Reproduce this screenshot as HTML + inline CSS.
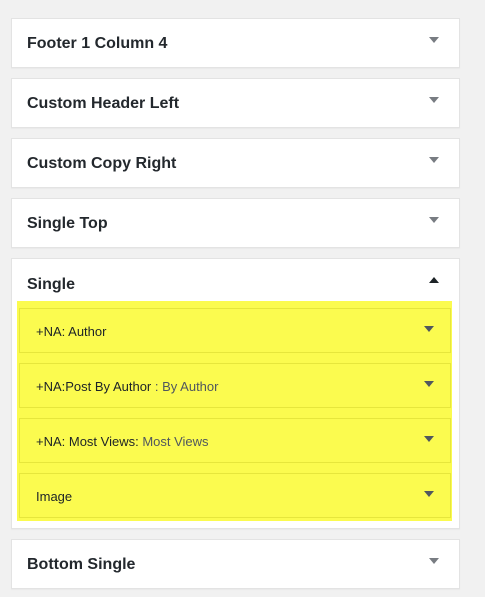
<!DOCTYPE html>
<html><head><style>
body{margin:0;width:485px;height:597px;background:#f1f1f1;font-family:"Liberation Sans",sans-serif;position:relative;overflow:hidden}
.box{position:absolute;left:11px;width:447px;background:#fff;border:1px solid #e3e3e3;box-shadow:0 1px 1px rgba(0,0,0,.04)}
.t{position:absolute;left:15px;font-size:16px;font-weight:bold;color:#23282d}
.ar{position:absolute;left:417px;width:0;height:0;border-left:5px solid transparent;border-right:5px solid transparent;border-top:6px solid #787c82}
.up{border-top:none;border-bottom:6px solid #1d2327}
.y{position:absolute;left:17px;top:301px;width:435px;height:220px;background:#fbfb4f}
.it{position:absolute;left:19px;width:430px;height:43px;border:1px solid #e6e63c;background:#fbfb4f}
.it span{position:absolute;left:16px;top:15px;font-size:13px;color:#1d2327}
.it i{font-style:normal;color:#50575e}
.it .ar{left:404px;top:17px;border-top-color:#50575e}
</style></head><body>
<div class="box" style="top:18px;height:48px"><div class="t" style="top:16px">Footer 1 Column 4</div><div class="ar" style="top:18px"></div></div>
<div class="box" style="top:78px;height:48px"><div class="t" style="top:16px">Custom Header Left</div><div class="ar" style="top:18px"></div></div>
<div class="box" style="top:138px;height:48px"><div class="t" style="top:16px">Custom Copy Right</div><div class="ar" style="top:18px"></div></div>
<div class="box" style="top:198px;height:48px"><div class="t" style="top:16px">Single Top</div><div class="ar" style="top:18px"></div></div>
<div class="box" style="top:258px;height:269px"><div class="t" style="top:17px">Single</div><div class="ar up" style="top:18px"></div></div>
<div class="y"></div>
<div class="it" style="top:308px"><span>+NA: Author</span><div class="ar"></div></div>
<div class="it" style="top:363px"><span>+NA:Post By Author <i>: By Author</i></span><div class="ar"></div></div>
<div class="it" style="top:418px"><span>+NA: Most Views: <i>Most Views</i></span><div class="ar"></div></div>
<div class="it" style="top:473px"><span>Image</span><div class="ar"></div></div>
<div class="box" style="top:539px;height:48px"><div class="t" style="top:16px">Bottom Single</div><div class="ar" style="top:18px"></div></div>
</body></html>
